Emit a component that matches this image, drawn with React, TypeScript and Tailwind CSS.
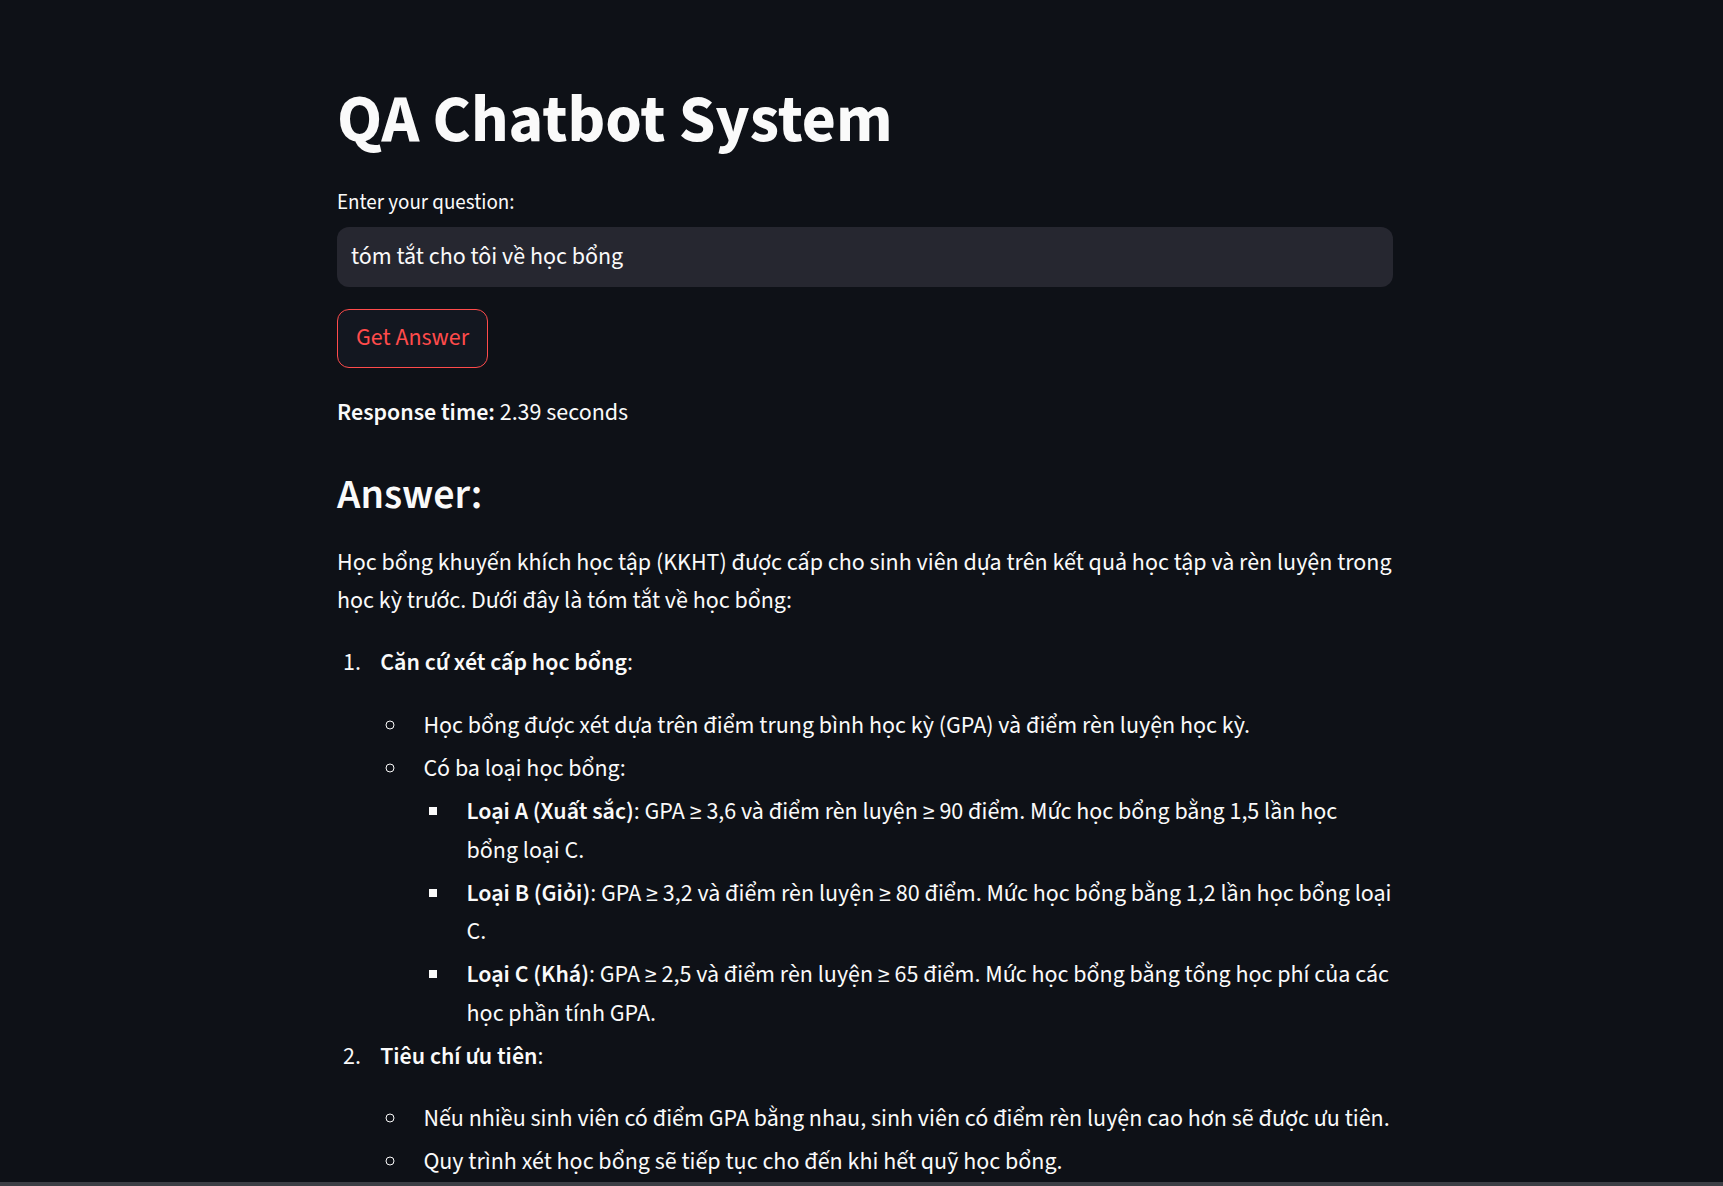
import React from "react";

const font = { fontFamily: '"Source Sans 3", "Source Sans Pro", "Roboto Condensed", sans-serif' };

const li = "ml-[28.8px] pl-[14.4px] my-[4.8px]";

export default function App() {
  return (
    <div className="h-[1186px] overflow-hidden bg-[#0e1117] text-[#fafafa] flex flex-col" style={font}>
      <div className="flex-1 flex justify-center pl-[7px] overflow-hidden">
        <div className="w-[1056px] pt-[81px]">
          <h1 className="text-[66px] font-bold leading-[1.2] m-0">QA Chatbot System</h1>
          <div className="mt-[26px] text-[21px] leading-[1.6]">Enter your question:</div>
          <div className="mt-[7px] h-[60px] rounded-[12px] bg-[#262730] flex items-center px-[14px] text-[24px]">
            tóm tắt cho tôi về học bổng
          </div>
          <button className="block mt-[22px] h-[59px] px-[18px] rounded-[12px] border border-[#ff4b4b] bg-[#131720] text-[#ff4b4b] text-[24px] leading-none">
            Get Answer
          </button>
          <p className="mt-[26px] text-[24px] leading-[1.6]">
            <b className="font-semibold">Response time:</b> 2.39 seconds
          </p>
          <h3 className="mt-[38px] text-[42px] font-semibold leading-[1.2]">Answer:</h3>
          <div className="mt-[23px] text-[24px] leading-[1.6]">
            <p className="mb-[24px]">
              Học bổng khuyến khích học tập (KKHT) được cấp cho sinh viên dựa trên kết quả học tập và rèn luyện trong học kỳ trước. Dưới đây là tóm tắt về học bổng:
            </p>
            <ol className="list-decimal m-0 p-0">
              <li className={li}>
                <p className="mb-[24px]"><b className="font-semibold">Căn cứ xét cấp học bổng</b>:</p>
                <ul className="list-[circle] m-0 p-0">
                  <li className={li}>Học bổng được xét dựa trên điểm trung bình học kỳ (GPA) và điểm rèn luyện học kỳ.</li>
                  <li className={li}>
                    Có ba loại học bổng:
                    <ul className="list-[square] m-0 p-0">
                      <li className={li}><b className="font-semibold">Loại A (Xuất sắc)</b>: GPA ≥ 3,6 và điểm rèn luyện ≥ 90 điểm. Mức học bổng bằng 1,5 lần học bổng loại C.</li>
                      <li className={li}><b className="font-semibold">Loại B (Giỏi)</b>: GPA ≥ 3,2 và điểm rèn luyện ≥ 80 điểm. Mức học bổng bằng 1,2 lần học bổng loại C.</li>
                      <li className={li}><b className="font-semibold">Loại C (Khá)</b>: GPA ≥ 2,5 và điểm rèn luyện ≥ 65 điểm. Mức học bổng bằng tổng học phí của các học phần tính GPA.</li>
                    </ul>
                  </li>
                </ul>
              </li>
              <li className={li}>
                <p className="mb-[24px]"><b className="font-semibold">Tiêu chí ưu tiên</b>:</p>
                <ul className="list-[circle] m-0 p-0">
                  <li className={li}>Nếu nhiều sinh viên có điểm GPA bằng nhau, sinh viên có điểm rèn luyện cao hơn sẽ được ưu tiên.</li>
                  <li className={li}>Quy trình xét học bổng sẽ tiếp tục cho đến khi hết quỹ học bổng.</li>
                </ul>
              </li>
            </ol>
          </div>
        </div>
      </div>
      <div className="h-[4px] bg-[#3d3f45] shrink-0" />
    </div>
  );
}
